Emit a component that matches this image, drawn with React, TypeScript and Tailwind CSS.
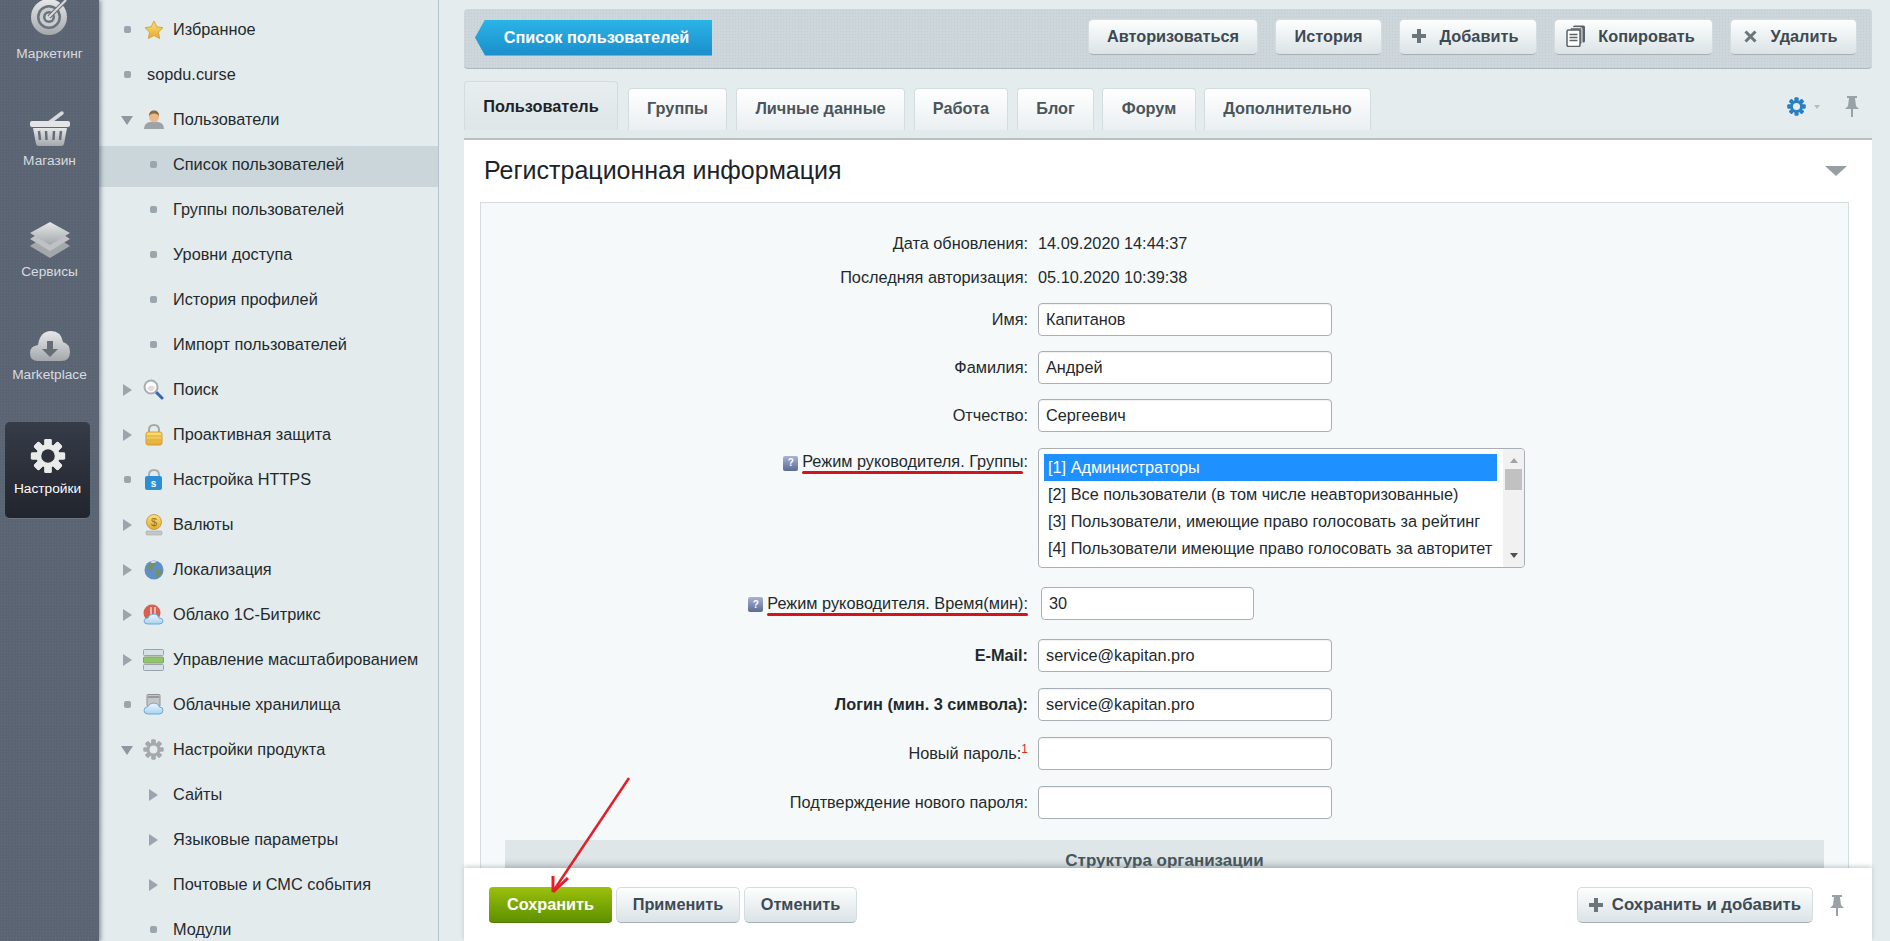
import React from "react";

type MenuItem = {
  label: string;
  level: 0 | 1;
  marker: "dot" | "right" | "down";
  icon?: React.ReactNode;
  active?: boolean;
  plain?: boolean;
};

function Defs() {
  return (
    <svg className="absolute h-0 w-0" aria-hidden="true">
      <defs>
        <linearGradient id="railIcon" x1="0" y1="0" x2="0" y2="1">
          <stop offset="0" stopColor="#e6e8e9" />
          <stop offset="1" stopColor="#a4a8ab" />
        </linearGradient>
        <linearGradient id="goldIcon" x1="0" y1="0" x2="0" y2="1">
          <stop offset="0" stopColor="#fbe27a" />
          <stop offset="1" stopColor="#e5a92c" />
        </linearGradient>
        <linearGradient id="cloudIcon" x1="0" y1="0" x2="0" y2="1">
          <stop offset="0" stopColor="#eef7fd" />
          <stop offset="1" stopColor="#a9d2ef" />
        </linearGradient>
      </defs>
    </svg>
  );
}

function TargetIcon() {
  return (
    <svg width="44" height="40" viewBox="0 0 44 40">
      <circle cx="21" cy="20" r="18" fill="url(#railIcon)" />
      <circle cx="21" cy="20" r="12" fill="#6a727e" />
      <circle cx="21" cy="20" r="9.5" fill="#c9cccd" />
      <circle cx="21" cy="20" r="6" fill="#6a727e" />
      <circle cx="21" cy="20" r="3.5" fill="#d4d6d7" />
      <path d="M21 20L38 3" stroke="#6a727e" strokeWidth="4" />
      <path d="M21 20L38 3" stroke="#d9dbdc" strokeWidth="2" />
    </svg>
  );
}

function BasketIcon() {
  return (
    <svg width="42" height="40" viewBox="0 0 42 40">
      <path d="M21 14L33 5" stroke="#d8dadb" strokeWidth="3.5" strokeLinecap="round" />
      <rect x="1" y="13" width="40" height="6" rx="2" fill="#e2e4e5" />
      <path d="M4 20H38L35 36Q34.700 38 32 38H10Q7.300 38 7 36Z" fill="url(#railIcon)" />
      <path d="M10 23L11 32M17 23L17.500 32M25 23L24.500 32M32 23L31 32" stroke="#666e7a" strokeWidth="2.500" />
    </svg>
  );
}

function LayersIcon() {
  return (
    <svg width="42" height="40" viewBox="0 0 42 40">
      <path d="M1 26L21 38L41 26L35 22L21 30L7 22Z" fill="#a4a8ab" />
      <path d="M1 19L21 31L41 19L35 15L21 23L7 15Z" fill="#bfc2c4" />
      <path d="M21 2L41 13L21 25L1 13Z" fill="url(#railIcon)" />
    </svg>
  );
}

function CloudDownIcon() {
  return (
    <svg width="42" height="40" viewBox="0 0 42 40">
      <path d="M9 36Q1 36 1 28Q1 21 9 20Q11 6 22 6Q32 6 34 17Q41 19 41 27Q41 36 32 36Z" fill="url(#railIcon)" />
      <path d="M18 16H24V24H29L21 32L13 24H18Z" fill="#656d79" />
    </svg>
  );
}

function Gear({ size, color, hole }: { size: number; color: string; hole: string }) {
  const teeth = [0, 45, 90, 135, 180, 225, 270, 315];
  return (
    <svg width={size} height={size} viewBox="0 0 40 40">
      {teeth.map((a) => (
        <rect key={a} x="16" y="1" width="8" height="38" rx="1.500" fill={color} transform={`rotate(${a} 20 20)`} />
      ))}
      <circle cx="20" cy="20" r="13" fill={color} />
      <circle cx="20" cy="20" r="7.500" fill={hole} />
    </svg>
  );
}

function StarIcon() {
  return (
    <svg width="20" height="20" viewBox="0 0 20 20">
      <path d="M10 1L12.800 6.800L19 7.700L14.500 12.100L15.600 18.500L10 15.500L4.400 18.500L5.500 12.100L1 7.700L7.200 6.800Z" fill="url(#goldIcon)" stroke="#d9a441" strokeWidth="1" />
    </svg>
  );
}

function UserIcon() {
  return (
    <svg width="20" height="20" viewBox="0 0 20 20">
      <path d="M0 19Q0 13 6 12H14Q20 13 20 19Z" fill="#9ca3a8" />
      <ellipse cx="10" cy="6.500" rx="5" ry="6" fill="#e8b98c" />
      <path d="M5 6Q5 0.500 10 0.500Q15 0.500 15 6Q13 3 10 3.500Q7 3 5 6Z" fill="#8a6a3f" />
    </svg>
  );
}

function SearchIcon() {
  return (
    <svg width="21" height="21" viewBox="0 0 21 21">
      <path d="M12 12L19 19" stroke="#3b62b8" strokeWidth="3" strokeLinecap="round" />
      <circle cx="8" cy="8" r="6.500" fill="#fff" stroke="#a9aeb2" strokeWidth="2" />
      <path d="M4 9Q8 5 12 8Q11 12 8 12Q5 12 4 9Z" fill="#eadada" />
    </svg>
  );
}

function LockIcon() {
  return (
    <svg width="20" height="22" viewBox="0 0 20 22">
      <path d="M5 9V6Q5 1 10 1Q15 1 15 6V9" fill="none" stroke="#a7a7a4" strokeWidth="2" />
      <rect x="2" y="8" width="16" height="13" rx="2" fill="url(#goldIcon)" stroke="#d69b32" />
      <path d="M3 12H17M3 16H17" stroke="#d9a941" />
    </svg>
  );
}

function HttpsIcon() {
  return (
    <svg width="20" height="22" viewBox="0 0 20 22">
      <path d="M5 9V6Q5 1 10 1Q15 1 15 6V9" fill="none" stroke="#a7adb2" strokeWidth="2" />
      <rect x="1" y="7" width="17" height="14" rx="2" fill="#2c8fd6" />
      <text x="9.500" y="18" textAnchor="middle" fontSize="10" fontWeight="700" fill="#fff" fontFamily="Liberation Sans, sans-serif">s</text>
    </svg>
  );
}

function CoinIcon() {
  return (
    <svg width="20" height="22" viewBox="0 0 20 22">
      <circle cx="10" cy="8" r="7.500" fill="url(#goldIcon)" stroke="#c99a53" />
      <text x="10" y="12" textAnchor="middle" fontSize="11" fill="#9b6b20" fontFamily="Liberation Sans, sans-serif">$</text>
      <rect x="2" y="17" width="16" height="4" rx="1" fill="#c5c7c6" stroke="#9a9c9b" strokeWidth="0.500" />
    </svg>
  );
}

function GlobeIcon() {
  return (
    <svg width="20" height="20" viewBox="0 0 20 20">
      <circle cx="10" cy="10" r="9.500" fill="#5f8fc4" />
      <path d="M3 6Q7 2 11 2Q12 5 9 7Q9 10 6 11Q3 9 3 6ZM12 10Q16 9 18 11Q17 16 13 18Q11 14 12 10Z" fill="#75906a" />
      <path d="M6 2Q9 0.500 13 1.500Q11 3 8 3Z" fill="#dfe9f2" />
    </svg>
  );
}

function BitrixCloudIcon() {
  return (
    <svg width="21" height="21" viewBox="0 0 21 21">
      <circle cx="9" cy="9" r="8.500" fill="#d9604f" />
      <path d="M8 3V11M12 3V10" stroke="#f4d9d3" strokeWidth="1.500" />
      <path d="M5 20Q1 20 1 17Q1 14 5 14Q6 10 11 10Q15 10 16 14Q20 14 20 17Q20 20 16 20Z" fill="url(#cloudIcon)" stroke="#6fa8d8" />
    </svg>
  );
}

function ServersIcon() {
  return (
    <svg width="21" height="22" viewBox="0 0 21 22">
      <rect x="0.500" y="0.500" width="20" height="6" rx="1" fill="#d7e0e6" stroke="#9aa3a7" />
      <rect x="0.500" y="8" width="20" height="6" rx="1" fill="#8fc860" stroke="#8a9a80" />
      <rect x="0.500" y="15.500" width="20" height="6" rx="1" fill="#d7e0e6" stroke="#9aa3a7" />
    </svg>
  );
}

function StorageIcon() {
  return (
    <svg width="21" height="21" viewBox="0 0 21 21">
      <rect x="4" y="0.500" width="13" height="12" rx="1" fill="#c4c6c8" stroke="#8f9295" />
      <path d="M5 3H16" stroke="#6a6d70" />
      <path d="M5 20Q1 20 1 16.500Q1 13 4.500 13Q6 9 11 9Q15.500 9 16.500 13Q20 13 20 16.500Q20 20 16 20Z" fill="url(#cloudIcon)" stroke="#6fa8d8" />
    </svg>
  );
}

const menu: MenuItem[] = [
  { label: "Избранное", level: 0, marker: "dot", icon: <StarIcon /> },
  { label: "sopdu.curse", level: 0, marker: "dot", plain: true },
  { label: "Пользователи", level: 0, marker: "down", icon: <UserIcon /> },
  { label: "Список пользователей", level: 1, marker: "dot", active: true },
  { label: "Группы пользователей", level: 1, marker: "dot" },
  { label: "Уровни доступа", level: 1, marker: "dot" },
  { label: "История профилей", level: 1, marker: "dot" },
  { label: "Импорт пользователей", level: 1, marker: "dot" },
  { label: "Поиск", level: 0, marker: "right", icon: <SearchIcon /> },
  { label: "Проактивная защита", level: 0, marker: "right", icon: <LockIcon /> },
  { label: "Настройка HTTPS", level: 0, marker: "dot", icon: <HttpsIcon /> },
  { label: "Валюты", level: 0, marker: "right", icon: <CoinIcon /> },
  { label: "Локализация", level: 0, marker: "right", icon: <GlobeIcon /> },
  { label: "Облако 1С-Битрикс", level: 0, marker: "right", icon: <BitrixCloudIcon /> },
  { label: "Управление масштабированием", level: 0, marker: "right", icon: <ServersIcon /> },
  { label: "Облачные хранилища", level: 0, marker: "dot", icon: <StorageIcon /> },
  { label: "Настройки продукта", level: 0, marker: "down", icon: <Gear size={21} color="#a5a9ab" hole="#e4ebed" /> },
  { label: "Сайты", level: 1, marker: "right" },
  { label: "Языковые параметры", level: 1, marker: "right" },
  { label: "Почтовые и СМС события", level: 1, marker: "right" },
  { label: "Модули", level: 1, marker: "dot" },
];

function Marker({ type }: { type: MenuItem["marker"] }) {
  if (type === "dot") return <span className="h-[7px] w-[7px] rounded-[2px] bg-[#9aa5ae]" />;
  if (type === "right") return <span className="h-0 w-0 border-y-[6px] border-l-[9px] border-y-transparent border-l-[#9aa5ae]" />;
  return <span className="mt-[2px] h-0 w-0 border-x-[6px] border-t-[9px] border-x-transparent border-t-[#8e98a0]" />;
}

function MenuRow({ item }: { item: MenuItem }) {
  return (
    <div
      className={`flex h-[41px] items-center ${item.level === 1 ? "pl-[44px]" : "pl-[18px]"} ${
        item.active ? "-mb-[2px] mt-[6px] bg-[#cbd6da] pb-[4px]" : "mt-[4px]"
      }`}
    >
      <div className="flex w-[20px] shrink-0 justify-center">
        <Marker type={item.marker} />
      </div>
      {item.level === 1 && <div className="w-[10px] shrink-0" />}
      {item.level === 0 && !item.plain && (
        <div className="ml-[6px] mr-[9px] flex w-[21px] shrink-0 justify-center">{item.icon}</div>
      )}
      {item.plain && <div className="w-[10px] shrink-0" />}
      <span className="whitespace-nowrap text-[16.3px] text-[#1f2a2e]">{item.label}</span>
    </div>
  );
}

function ToolButton({
  width,
  icon,
  gap = "gap-[14px]",
  text = "text-[16.3px]",
  children,
}: {
  width: string;
  icon?: React.ReactNode;
  gap?: string;
  text?: string;
  children: React.ReactNode;
}) {
  return (
    <button className={`flex h-[36px] items-center justify-center rounded-[5px] border border-[#d5dcdf] border-b-[#a7b0b4] bg-linear-to-b from-[#fdfefe] to-[#dbe3e6] pb-[1px] font-bold text-[#3e4a53] ${gap} ${text} ${width}`}>
      {icon}
      {children}
    </button>
  );
}

function PlusIcon() {
  return (
    <svg width="14" height="14" viewBox="0 0 14 14">
      <path d="M5 0H9V5H14V9H9V14H5V9H0V5H5Z" fill="#6c757b" />
    </svg>
  );
}

function CopyIcon() {
  return (
    <svg width="20" height="22" viewBox="0 0 20 22">
      <rect x="7" y="0.500" width="12" height="17" rx="1.500" fill="#59636a" />
      <rect x="4" y="2.500" width="12" height="17" rx="1.500" fill="#7b858b" stroke="#fff" strokeWidth="0.800" />
      <rect x="1" y="5" width="13" height="16.500" rx="1.500" fill="#fff" stroke="#59636a" strokeWidth="1.500" />
      <path d="M3.500 9.500H11.500M3.500 12.500H11.500M3.500 15.500H11.500" stroke="#59636a" strokeWidth="1.300" />
    </svg>
  );
}

function CloseIcon() {
  return (
    <svg width="13" height="13" viewBox="0 0 13 13">
      <path d="M1.500 1.500L11.500 11.500M11.500 1.500L1.500 11.500" stroke="#6c757b" strokeWidth="3" />
    </svg>
  );
}

function PinIcon() {
  return (
    <svg width="14" height="21" viewBox="0 0 14 21">
      <path d="M2 0H12V2H10L11 10L14 13H8V21H6V13H0L3 10L4 2H2Z" fill="#99a2a6" />
    </svg>
  );
}

function Tab({ width, active, children }: { width: string; active?: boolean; children: React.ReactNode }) {
  return (
    <div
      className={`flex items-center justify-center rounded-t-[4px] border border-b-0 border-[#d3dcdf] text-[16.3px] font-bold ${width} ${
        active ? "h-[49px] bg-linear-to-b from-[#e8eef0] to-[#dfe6e8] text-[#1c2329]" : "h-[42px] bg-linear-to-b from-white to-[#eaeff1] pb-[3px] text-[#4a555c]"
      }`}
    >
      {children}
    </div>
  );
}

function Label({ children, bold }: { children: React.ReactNode; bold?: boolean }) {
  return (
    <div className={`w-[557px] shrink-0 whitespace-nowrap pr-[10px] text-right text-[16.3px] text-[#1f2a2e] ${bold ? "font-bold" : ""}`}>
      {children}
    </div>
  );
}

function HelpIcon() {
  return (
    <span className="mr-[4px] inline-flex h-[15px] w-[15px] items-center justify-center rounded-[2px] bg-linear-to-b from-[#aab4d2] to-[#5b6a97] align-[1px] text-[10px] font-bold leading-none text-white">
      ?
    </span>
  );
}

function Underlined({ children }: { children: React.ReactNode }) {
  return (
    <span className="relative">
      {children}
      <span className="absolute -bottom-[4px] left-0 right-0 h-[3px] rounded-full bg-[#d3141c]" />
    </span>
  );
}

function InputRow({ label, value, bold }: { label: React.ReactNode; value?: string; bold?: boolean }) {
  return (
    <div className="flex h-[49px] items-center">
      <Label bold={bold}>{label}</Label>
      <div className="flex h-[33px] w-[294px] items-center rounded-[4px] border border-[#a8b0b5] bg-white pl-[7px] text-[16.3px] text-[#1f2a2e] shadow-[inset_0_1px_1px_rgba(0,0,0,0.06)]">
        {value}
      </div>
    </div>
  );
}

const groups = [
  "[1] Администраторы",
  "[2] Все пользователи (в том числе неавторизованные)",
  "[3] Пользователи, имеющие право голосовать за рейтинг",
  "[4] Пользователи имеющие право голосовать за авторитет",
];

export default function App() {
  return (
    <div className="relative flex h-screen w-full overflow-hidden font-['Liberation_Sans',Arial,sans-serif]">
      <Defs />

      {/* Rail */}
      <aside className="z-10 flex w-[99px] shrink-0 flex-col items-center overflow-hidden bg-[#5b6473] bg-[radial-gradient(#646d7c_1px,transparent_1px)] bg-[length:3px_3px] text-[13.7px] text-[#d8dcdf] shadow-[2px_0_4px_rgba(40,50,60,0.45)]">
        <div className="-mt-[3px] flex h-[40px] items-center justify-center">
          <TargetIcon />
        </div>
        <span className="mt-[9px] h-[16px] leading-[16px]">Маркетинг</span>

        <div className="mt-[46px] flex h-[40px] items-center justify-center">
          <BasketIcon />
        </div>
        <span className="mt-[5px] h-[16px] leading-[16px]">Магазин</span>

        <div className="mt-[51px] flex h-[40px] items-center justify-center">
          <LayersIcon />
        </div>
        <span className="mt-[4px] h-[16px] leading-[16px]">Сервисы</span>

        <div className="mt-[45px] flex h-[40px] items-center justify-center">
          <CloudDownIcon />
        </div>
        <span className="mt-[2px] h-[16px] leading-[16px]">Marketplace</span>

        <div className="mr-[4px] mt-[39px] flex h-[97px] w-[85px] flex-col items-center rounded-[5px] border-b border-[#6e7784] bg-linear-to-b from-[#363c48] to-[#21252e] pt-[16px] text-white">
          <Gear size={36} color="#e9eaea" hole="#2c313b" />
          <span className="mt-[7px] h-[16px] leading-[16px]">Настройки</span>
        </div>
      </aside>

      {/* Menu */}
      <nav className="w-[340px] shrink-0 overflow-hidden border-r border-[#b4c2d2] bg-[#e3ebed] pt-[5px]">
        {menu.map((item) => (
          <MenuRow key={item.label} item={item} />
        ))}
      </nav>

      {/* Main */}
      <main className="flex min-w-0 flex-1 flex-col bg-[#e4ecee] pl-[25px] pr-[18px] pt-[9px]">
        <div className="flex h-[60px] shrink-0 items-center rounded-[4px] border-b border-[#aeb8bc] bg-[#cdd6da] bg-[radial-gradient(#c3cdd1_1px,transparent_1px)] bg-[length:3px_3px] pb-[2px] pl-[11px] pr-[15px]">
          <div className="flex h-[36px] w-[237px] items-center justify-center bg-linear-to-b from-[#2bb4e6] to-[#1a8ecb] pb-[1px] pl-[6px] text-[16.3px] font-bold text-white shadow-[0_1px_1px_rgba(0,60,90,0.5)] [clip-path:polygon(10px_0,100%_0,100%_100%,10px_100%,0_50%)]">
            Список пользователей
          </div>
          <div className="-mt-[2px] ml-auto flex items-center gap-[17px]">
            <ToolButton width="w-[170px]">Авторизоваться</ToolButton>
            <ToolButton width="w-[107px]">История</ToolButton>
            <ToolButton width="w-[138px] pr-[6px]" icon={<PlusIcon />}>Добавить</ToolButton>
            <ToolButton width="w-[159px] pr-[6px]" gap="gap-[12px]" icon={<CopyIcon />}>Копировать</ToolButton>
            <ToolButton width="w-[127px] pr-[6px]" icon={<CloseIcon />}>Удалить</ToolButton>
          </div>
        </div>

        <div className="mt-[12px] flex h-[49px] shrink-0 items-end gap-[8px]">
          <Tab width="w-[154px]" active>Пользователь</Tab>
          <Tab width="ml-[2px] w-[99px]">Группы</Tab>
          <Tab width="ml-[1px] w-[169px]">Личные данные</Tab>
          <Tab width="ml-[1px] w-[94px]">Работа</Tab>
          <Tab width="ml-[1px] w-[77px]">Блог</Tab>
          <Tab width="w-[94px]">Форум</Tab>
          <Tab width="w-[167px]">Дополнительно</Tab>
          <div className="ml-auto flex items-center self-start pt-[15px]">
            <Gear size={19} color="#2a7fc0" hole="#e4ecee" />
            <span className="ml-[8px] h-0 w-0 border-x-[3px] border-t-[4px] border-x-transparent border-t-[#b3bcc1]" />
            <div className="ml-[25px] mr-[13px]">
              <PinIcon />
            </div>
          </div>
        </div>

        <section className="flex min-h-0 flex-1 flex-col overflow-hidden">
          <div className="h-[10px] shrink-0 border-b-2 border-[#b7c1c4] bg-[#e3eaec]" />
          <div className="flex h-[62px] shrink-0 items-center justify-between bg-white pl-[20px] pr-[25px]">
            <h1 className="text-[25px] font-normal text-[#1c2329]">Регистрационная информация</h1>
            <span className="h-0 w-0 border-x-[11px] border-t-[10px] border-x-transparent border-t-[#989fa3]" />
          </div>
          <div className="flex min-h-0 flex-1 bg-white pl-[16px] pr-[23px]">
            <div className="min-h-0 flex-1 overflow-hidden border-x border-t border-[#d5dcdd] bg-[#f5f9f9] pt-[23px]">
              <div className="flex h-[34px] items-center">
                <Label>Дата обновления:</Label>
                <span className="text-[16.3px] text-[#1f2a2e]">14.09.2020 14:44:37</span>
              </div>
              <div className="flex h-[35px] items-center">
                <Label>Последняя авторизация:</Label>
                <span className="text-[16.3px] text-[#1f2a2e]">05.10.2020 10:39:38</span>
              </div>
              <div className="[&>div]:h-[48px]">
                <InputRow label="Имя:" value="Капитанов" />
                <InputRow label="Фамилия:" value="Андрей" />
                <InputRow label="Отчество:" value="Сергеевич" />
              </div>

              <div className="mt-[9px] flex">
                <Label>
                  <span className="relative top-[1px]">
                    <HelpIcon />
                    <Underlined>Режим руководителя. Группы</Underlined>:
                  </span>
                </Label>
                <div className="flex h-[120px] w-[487px] rounded-[4px] border border-[#a8b0b5] bg-white">
                  <div className="flex-1 pl-[5px] pt-[5px] text-[16.3px] text-[#1f2a2e]">
                    {groups.map((g, i) => (
                      <div key={g} className={`flex h-[27px] w-[453px] items-center whitespace-nowrap pl-[4px] ${i === 0 ? "bg-[#1e90ff] text-white" : ""}`}>
                        {g}
                      </div>
                    ))}
                  </div>
                  <div className="flex w-[21px] flex-col items-center rounded-r-[4px] bg-[#f1f1f1] pt-[9px]">
                    <span className="h-0 w-0 border-x-[4px] border-b-[5px] border-x-transparent border-b-[#a3a3a3]" />
                    <span className="mt-[6px] h-[21px] w-[17px] bg-[#c1c1c1]" />
                    <span className="mb-[9px] mt-auto h-0 w-0 border-x-[4px] border-t-[5px] border-x-transparent border-t-[#505050]" />
                  </div>
                </div>
              </div>

              <div className="mt-[11px] flex h-[48px] items-center">
                <Label>
                  <HelpIcon />
                  <Underlined>Режим руководителя. Время(мин):</Underlined>
                </Label>
                <div className="ml-[3px] flex h-[33px] w-[213px] items-center rounded-[4px] border border-[#a8b0b5] bg-white pl-[7px] text-[16.3px] text-[#1f2a2e]">
                  30
                </div>
              </div>

              <div className="mt-[4px]">
                <InputRow label="E-Mail:" value="service@kapitan.pro" bold />
                <InputRow label="Логин (мин. 3 символа):" value="service@kapitan.pro" bold />
                <InputRow
                  label={
                    <>
                      Новый пароль:<sup className="text-[12px] text-[#e0291f]">1</sup>
                    </>
                  }
                />
                <InputRow label="Подтверждение нового пароля:" />
              </div>

              <div className="mx-[24px] mt-[13px] flex h-[30px] justify-center bg-linear-to-b from-[#dfe6e8] from-60% to-[#c3ccd0] pt-[8px] text-[17px] font-bold text-[#46545b]">
                Структура организации
              </div>
            </div>
          </div>
        </section>

        <footer className="z-10 flex h-[73px] shrink-0 items-start bg-white pl-[25px] pr-[28px] pt-[19px] shadow-[0_-2px_4px_rgba(120,135,140,0.35)]">
          <button className="h-[36px] w-[123px] rounded-[4px] border-b border-[#4f7a00] bg-linear-to-b from-[#9cc00c] to-[#5d9100] pb-[1px] text-[16.3px] font-bold text-white">
            Сохранить
          </button>
          <div className="ml-[4px] flex gap-[4px]">
            <ToolButton width="w-[124px]">Применить</ToolButton>
            <ToolButton width="w-[113px]">Отменить</ToolButton>
          </div>
          <div className="ml-auto flex items-center">
            <ToolButton width="w-[236px]" gap="gap-[9px]" text="text-[16.8px]" icon={<PlusIcon />}>
              Сохранить и добавить
            </ToolButton>
            <div className="ml-[17px]">
              <PinIcon />
            </div>
          </div>
        </footer>
      </main>

      {/* annotation arrow */}
      <svg className="pointer-events-none absolute left-[540px] top-[770px] z-20" width="100" height="130" viewBox="0 0 100 130">
        <path d="M89 8L14 120" stroke="#e3202a" strokeWidth="2.500" />
        <path d="M13 122L13 106M13 122L28 108" stroke="#e3202a" strokeWidth="3" />
      </svg>
    </div>
  );
}
